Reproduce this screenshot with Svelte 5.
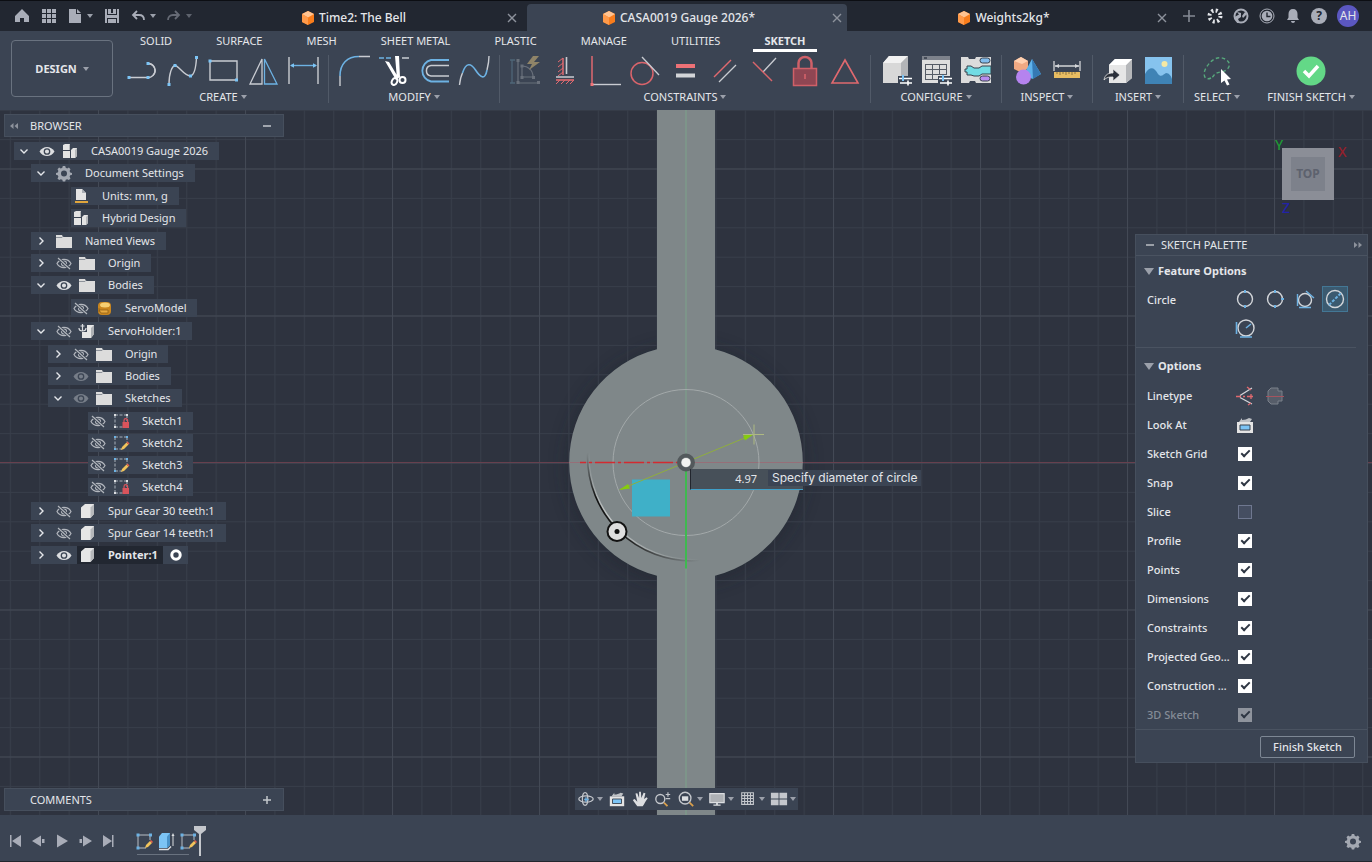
<script>
	const tools = {
		line: '<path d="M2 22.500H21M21 8.500a7 7 0 0 1 5 12" fill="none" stroke="#c9ccd2" stroke-width="1.400"/><path d="M21 8.500a7 7 0 0 1 0 14" fill="none" stroke="#c9ccd2" stroke-width="1.400"/><g fill="#7cc4f5"><path d="M.5 21h3v3h-3zM19.500 21h3v3h-3zM19.500 7h3v3h-3z"/></g>',
		spline:
			'<path d="M2 29.500C2 18 5 11 8 10.500S17 21 23.500 21C28 20 29 12 29.500 2.500" fill="none" stroke="#c9ccd2" stroke-width="1.400"/><path d="M.5 28h3v3h-3zM6.500 9h3v3h-3zM22 19.500h3v3h-3zM28 1h3v3h-3z" fill="#7cc4f5"/>',
		rect: '<path d="M3 6H30V25H3z" fill="none" stroke="#c9ccd2" stroke-width="1.400"/><path d="M1.500 4.500h3v3h-3zM28 23.500h3v3h-3z" fill="#7cc4f5"/>',
		mirror:
			'<path d="M15 4V29H3z" fill="none" stroke="#c9ccd2" stroke-width="1.300"/><path d="M17.500 4V29H30z" fill="none" stroke="#6db2e3" stroke-width="1.300"/>',
		dimension:
			'<path d="M2 2V29M31 2V29" stroke="#c9ccd2" stroke-width="1.400"/><path d="M4 10.500H29" stroke="#6db2e3" stroke-width="1.400"/><path d="M3 10.500l4-2.200v4.400zM30 10.500l-4-2.200v4.400z" fill="#7cc4f5"/>',
		fillet:
			'<path d="M2 31V21M21 1.500H32" stroke="#c9ccd2" stroke-width="1.400"/><path d="M2 21C2 9 9 1.500 21 1.500" fill="none" stroke="#6db2e3" stroke-width="1.600"/>',
		trim: '<path d="M1 3h5M8 3h5" stroke="#6db2e3" stroke-width="1.500"/><path d="M24 3h7" stroke="#c9ccd2" stroke-width="1.500"/><path d="M7 6l4 1 9 15-2 3zM17 1h4l1 21-3 2z" fill="#fff"/><ellipse cx="16.500" cy="26.500" rx="2.600" ry="3.600" fill="none" stroke="#fff" stroke-width="2" transform="rotate(25 16.500 26.500)"/><ellipse cx="24.500" cy="25" rx="3" ry="3" fill="none" stroke="#fff" stroke-width="2"/>',
		offset:
			'<path d="M31 5H13a11 11 0 0 0 0 21.500H31" fill="none" stroke="#6db2e3" stroke-width="1.800"/><path d="M31 10.500H13a5.300 5.300 0 0 0 0 10.500H31" fill="none" stroke="#c9ccd2" stroke-width="1.500"/>',
		curve:
			'<path d="M1.500 30C2 25 3 21 4.500 18M29 15C30 11 31 6 31 1" fill="none" stroke="#c9ccd2" stroke-width="1.400"/><path d="M4.500 18C8 7 13 8 17.500 15S27 26 29 15" fill="none" stroke="#6db2e3" stroke-width="1.600"/>',
		auto: '<path d="M3 5V28M1 5h5M1 28h5" stroke="#4f6678" stroke-width="1.300"/><path d="M9 5V28H30M13 11V22H24M13 11C19 11 24 15 24 22" fill="none" stroke="#69707b" stroke-width="1.200"/><path d="M7.500 4h3v3h-3zM7.500 26h3v3h-3zM28 26h3v3h-3zM11.500 9.500h3v3h-3zM11.500 21h3v3h-3zM23 21h3v3h-3z" fill="#69707b"/><path d="M24 1l-6 8h5l-3 6 11-8h-6l5-6z" fill="#8f8468"/>',
		fix: '<path d="M14 3V20" stroke="#e0696f" stroke-width="1.500"/><path d="M9 7l5-4M9 12l5-4M9 17l5-4M9 21l5-4" stroke="#e0696f"/><path d="M17.500 2V19M7 22H25" stroke="#c9ccd2" stroke-width="1.600"/><path d="M7 25H25" stroke="#e0696f" stroke-width="1.600"/><path d="M7 29l4-4M12 29l4-4M17 29l4-4M21 29l4-4" stroke="#e0696f"/>',
		coincident:
			'<path d="M3 1V28" stroke="#e0696f" stroke-width="1.500"/><path d="M4 29.500H32" stroke="#c9ccd2" stroke-width="1.400"/><path d="M1.500 28h3v3h-3z" fill="#f07478"/>',
		tangent:
			'<circle cx="13" cy="18.500" r="11" fill="none" stroke="#d9646b" stroke-width="1.500"/><path d="M13 2L30 20" stroke="#c9ccd2" stroke-width="1.300"/>',
		equal:
			'<path d="M7 9H26v4H7z" fill="#ed7176"/><path d="M7 18.500H26v4H7z" fill="#d3d5d8"/>',
		parallel:
			'<path d="M5 22L22 5" stroke="#e0696f" stroke-width="1.500"/><path d="M10 27L27 10" stroke="#c9ccd2" stroke-width="1.300"/>',
		perpendicular:
			'<path d="M27 3L14 17" stroke="#c9ccd2" stroke-width="1.300"/><path d="M4 7L23 26" stroke="#d9646b" stroke-width="1.500"/>',
		lock: '<path d="M9.500 13V8a6.500 6 0 0 1 13 0V13" fill="none" stroke="#cf6068" stroke-width="2.500"/><path d="M4.500 13.500H27.500V30.500H4.500z" fill="#8f4653" stroke="#cf6068" stroke-width="1.500"/><path d="M16 19v5" stroke="#d9646b" stroke-width="1.500"/>',
		triangle:
			'<path d="M16 5L29 28H3z" fill="none" stroke="#e0696f" stroke-width="1.600"/>',
		configBody:
			'<path d="M3 8L9 1H28V21L21 28H3z" fill="#d8d8d8"/><path d="M3 8L9 1H28L21 8z" fill="#f2f2f2"/><path d="M21 8L28 1V21L21 28z" fill="#b3b5b8"/><path d="M18 21h14v9H18z" fill="#3b4453"/><path d="M19 23.500h13M20 28h12" stroke="#fff" stroke-width="1.300"/><path d="M23 20v6" stroke="#7cc4f5" stroke-width="2"/><path d="M28 25.500v5" stroke="#fff" stroke-width="1.600"/>',
		configTable:
			'<path d="M2 1H30V28H2z" fill="#dedede"/><path d="M2 1H30V5H2z" fill="#7d828b"/><path d="M4 2h3v2H4z" fill="#454c58"/><path d="M5 9.500H27M5 14.500H27M5 19.500H27M5 24.500H18M5.500 9V25M12.500 9V25M19.500 9V20M26.500 9V20" stroke="#565c66"/><path d="M18 21h14v9H18z" fill="#3b4453"/><path d="M19 23.500h13M20 28h12" stroke="#fff" stroke-width="1.300"/><path d="M23 20v6" stroke="#7cc4f5" stroke-width="2"/><path d="M28 25.500v5" stroke="#fff" stroke-width="1.600"/>',
		configRules:
			'<path d="M1 2h7l1 2h6l1-2h15v26H16l-1-2h-5l-1 2H1z" fill="#dcdcdc"/><path d="M7 11h4l3 2h5l3-2h9v8H22l-3 2h-5l-3-1H7v-3H5v-3h2z" fill="#72dce4" stroke="#39424f"/><rect x="20" y="3" width="10" height="5" rx="2.500" fill="#82bcec" stroke="#39424f"/><rect x="20" y="21" width="10" height="5" rx="2.500" fill="#b88cf0" stroke="#39424f"/>',
		inspect:
			'<path d="M10 2l7 4v7l-6 5-8-4V6z" fill="#f0a983"/><path d="M10 2l7 4-6 3-8-3z" fill="#ffd0b0"/><path d="M21 4l9 15-9 5-7-7z" fill="#5fb2ea"/><path d="M21 4l9 15-8 5z" fill="#3579b4"/><circle cx="12.500" cy="22" r="7.500" fill="#b583ef"/>',
		measure:
			'<path d="M3 6V16M29 6V16M4 11H28" stroke="#d3d5d8" stroke-width="1.300"/><path d="M4 11l4-2v4zM28 11l-4-2v4z" fill="#d3d5d8"/><path d="M3 17H29V23H3z" fill="#e8bd62"/><path d="M6 17v2M9 17v3M12 17v2M15 17v3M18 17v2M21 17v3M24 17v2" stroke="#8d7440"/>',
		insertBody:
			'<path d="M7 10L13 4H30V23L24 28H7z" fill="#e6e6e6"/><path d="M24 10L30 4V23L24 28z" fill="#b5b7ba"/><path d="M7 10L13 4H30L24 10z" fill="#fff"/><path d="M2 25C3 19 7 18 11 18V14l7 6-7 6V22C7 22 5 22 2 25z" fill="#2b303a" stroke="#e6e6e6" stroke-width=".8"/>',
		insertImage:
			'<path d="M3 2H30V29H3z" fill="#86c3ee"/><path d="M3 19C8 11 12 12 16 19C19 23 22 19 24 18C27 18 29 21 30 24V29H3z" fill="#3f83b5"/><circle cx="22.500" cy="9" r="3" fill="#f5e9a5"/>',
		select:
			'<path d="M10 23C4 26 1 20 5 13S16 0 24 4S28 16 20 17S14 21 10 23z" fill="none" stroke="#57a87c" stroke-width="1.400" stroke-dasharray="3.500 2.500"/><path d="M20 14L30 24l-4 .5 2.500 5-2.500 1-2.500-5L20 28z" fill="#fff"/>',
		finish:
			'<circle cx="16" cy="16" r="14.500" fill="#63d887"/><path d="M9 16l5 5 9-10" fill="none" stroke="#fff" stroke-width="3.500"/>'
	};

	const groups = [
		{ label: 'CREATE', icons: ['line', 'spline', 'rect', 'mirror', 'dimension'] },
		{ label: 'MODIFY', icons: ['fillet', 'trim', 'offset', 'curve'] },
		{
			label: 'CONSTRAINTS',
			icons: ['auto', 'fix', 'coincident', 'tangent', 'equal', 'parallel', 'perpendicular', 'lock', 'triangle']
		},
		{ label: 'CONFIGURE', icons: ['configBody', 'configTable', 'configRules'] },
		{ label: 'INSPECT', icons: ['inspect', 'measure'] },
		{ label: 'INSERT', icons: ['insertBody', 'insertImage'] },
		{ label: 'SELECT', icons: ['select'] },
		{ label: 'FINISH SKETCH', icons: ['finish'] }
	];

	const menuTabs = ['SOLID', 'SURFACE', 'MESH', 'SHEET METAL', 'PLASTIC', 'MANAGE', 'UTILITIES', 'SKETCH'];
	let activeTab = $state('SKETCH');

	const docs = ['Time2: The Bell', 'CASA0019 Gauge 2026*', 'Weights2kg*'];
	let activeDoc = $state(1);

	const gear =
		'<path d="M8.800 2h2.400l.5 1.800 1.500.7 1.700-.9 1.600 1.700-.9 1.600.6 1.500 1.800.5v1.800l-1.800.6-.6 1.500.9 1.600-1.600 1.700-1.700-.9-1.500.6-.5 1.700H8.800l-.5-1.700-1.500-.6-1.700.9-1.600-1.700.9-1.600-.6-1.500L2 10.700V8.900l1.800-.5.6-1.500-.9-1.600 1.600-1.700 1.700.9 1.500-.7z" fill="#a3a8b1"/><circle cx="10" cy="9.500" r="3" fill="#3b4453"/>';

	// 20x18 icons for the browser tree
	const nodes = {
		eye: '<path d="M2.500 9.500C6 3.500 14 3.500 17.500 9.500C14 15.500 6 15.500 2.500 9.500z" fill="#dcdee1"/><circle cx="10" cy="9.500" r="2.700" fill="#dcdee1" stroke="#3b4453" stroke-width="1.300"/>',
		dim: '<path d="M2.500 9.500C6 3.500 14 3.500 17.500 9.500C14 15.500 6 15.500 2.500 9.500z" fill="#767d88"/><circle cx="10" cy="9.500" r="2.700" fill="#767d88" stroke="#3b4453" stroke-width="1.300"/>',
		off: '<path d="M3 9.500C6 4 14 4 17 9.500C14 15 6 15 3 9.500z" fill="none" stroke="#b3b7be" stroke-width="1.200"/><circle cx="10" cy="9.500" r="2.500" fill="none" stroke="#b3b7be" stroke-width="1.200"/><path d="M4 4L16 15" stroke="#3b4453" stroke-width="3"/><path d="M4 4L16 15" stroke="#b3b7be" stroke-width="1.200"/>',
		assembly:
			'<path d="M3 3l2-1h5v6H3zM3 9h7v7H3zM11 8l2-2h4v8l-2 2h-4z" fill="#e4e4e4"/><path d="M9 3l1-1v6H9zM15 8l2-2v8l-2 2z" fill="#b6b8bb"/>',
		gear,
		units:
			'<path d="M5 2h6l4 4v7H5z" fill="#e4e4e4"/><path d="M11 2l4 4h-4z" fill="#a9adb3"/><path d="M4 14H17V16H4z" fill="#e0a53c"/>',
		folder: '<path d="M2 3h6l1 2h9v11H2z" fill="#dcdcdc"/><path d="M2 5.500h6l1-1" fill="none" stroke="#8d929a"/>',
		body: '<rect x="4" y="3" width="13" height="13" rx="4" fill="#c9861f"/><ellipse cx="11" cy="6" rx="5" ry="2.500" fill="#f6cf72"/><path d="M5 9v4M5 11h9v3H7z" fill="#e8aa3f" stroke="#8a5c14" stroke-width=".7"/>',
		anchored:
			'<path d="M5 6l3-3h9v9l-3 4H5z" fill="#e6e6e6"/><path d="M14 6l3-3v9l-3 4z" fill="#aeb1b5"/><path d="M1 0h9v10H1z" fill="#3b4453"/><path d="M5.500 2v7M3.500 4h4M2 6c0 4 7 4 7 0" fill="none" stroke="#dcdee1" stroke-width="1.200"/>',
		part: '<path d="M4 5.500L8 2h9v10l-3.500 4H4z" fill="#e6e6e6"/><path d="M13.500 5.500L17 2v10l-3.500 4z" fill="#b6b8bb"/>',
		locked:
			'<path d="M4 3H16M4 3V15M4 15H12M16 3V9" stroke="#a9b0ba" stroke-dasharray="3 1.500"/><path d="M3 2h2v2H3zM15 2h2v2h-2zM3 14h2v2H3z" fill="#dcdee1"/><path d="M11.500 10h6.500v6h-6.500z" fill="#d9545c"/><path d="M13 10V8.500a1.800 1.800 0 0 1 3.600 0V10" fill="none" stroke="#d9545c" stroke-width="1.200"/>',
		edited:
			'<path d="M4 3H16M4 3V15M4 15H11M16 3V8" stroke="#a9b0ba" stroke-dasharray="3 1.500"/><path d="M3 2h2v2H3zM15 2h2v2h-2zM3 14h2v2H3z" fill="#6db2e3"/><path d="M10 16l1-3 4.500-4.500 2 2L13 15z" fill="#f1c35b"/><path d="M15.500 8.500l1-1 2 2-1 1z" fill="#e8604c"/>'
	};

	let tree = $state([
		{ label: 'CASA0019 Gauge 2026', icon: 'assembly', eye: 'eye', open: true, children: [
			{ label: 'Document Settings', icon: 'gear', open: true, children: [
				{ label: 'Units: mm, g', icon: 'units' },
				{ label: 'Hybrid Design', icon: 'assembly' }
			] },
			{ label: 'Named Views', icon: 'folder', children: [] },
			{ label: 'Origin', icon: 'folder', eye: 'off', children: [] },
			{ label: 'Bodies', icon: 'folder', eye: 'eye', open: true, children: [
				{ label: 'ServoModel', icon: 'body', eye: 'off' }
			] },
			{ label: 'ServoHolder:1', icon: 'anchored', eye: 'off', open: true, children: [
				{ label: 'Origin', icon: 'folder', eye: 'off', children: [] },
				{ label: 'Bodies', icon: 'folder', eye: 'dim', children: [] },
				{ label: 'Sketches', icon: 'folder', eye: 'dim', open: true, children: [
					{ label: 'Sketch1', icon: 'locked', eye: 'off' },
					{ label: 'Sketch2', icon: 'edited', eye: 'off' },
					{ label: 'Sketch3', icon: 'edited', eye: 'off' },
					{ label: 'Sketch4', icon: 'locked', eye: 'off' }
				] }
			] },
			{ label: 'Spur Gear 30 teeth:1', icon: 'part', eye: 'off', children: [] },
			{ label: 'Spur Gear 14 teeth:1', icon: 'part', eye: 'off', children: [] },
			{ label: 'Pointer:1', icon: 'part', eye: 'eye', active: true, children: [] }
		] }
	]);

	// 20x20 icons for the circle tool variants
	const circles = [
		{ name: 'Center diameter circle', art: '<circle cx="10" cy="10" r="7.500"/><path d="M10 1v3M10 16v3" stroke="#6db2e3" stroke-width="2"/>' },
		{ name: '2-point circle', art: '<circle cx="10" cy="10" r="7.500"/><path d="M10 1v3M10 16v3M16 10h3" stroke="#6db2e3" stroke-width="2"/>' },
		{ name: '2-tangent circle', art: '<circle cx="10" cy="11" r="6.500"/><path d="M2.500 5v12M4 18.500h12M11 2l8 7" stroke="#6db2e3"/>' },
		{ name: 'Diameter circle', art: '<circle cx="10" cy="10" r="8.500"/><path d="M4 16L16 4" stroke="#6db2e3" stroke-width="2" stroke-dasharray="3 1.500"/>' },
		{ name: '3-tangent circle', art: '<circle cx="11" cy="10" r="8"/><path d="M1.500 4v12M5 19h12M11 10l5-4" stroke="#6db2e3" stroke-width="1.600"/>' }
	];
	let circle = $state(3);

	let options = $state([
		{ label: 'Sketch Grid', on: true },
		{ label: 'Snap', on: true },
		{ label: 'Slice', on: false },
		{ label: 'Profile', on: true },
		{ label: 'Points', on: true },
		{ label: 'Dimensions', on: true },
		{ label: 'Constraints', on: true },
		{ label: 'Projected Geometries', on: true },
		{ label: 'Construction Geometries', on: true },
		{ label: '3D Sketch', on: true, disabled: true }
	]);

	const lookAt =
		'<path d="M2 7h16v11H2z" fill="#e4e4e4"/><path d="M4 7l3-4v2c3 0 5-1 7-2l3 1-2 3z" fill="#bfc2c6"/><path d="M5 10h10v5H5z" fill="#7cc4f5" stroke="#39424f"/>';

	const nav = [
		{ name: 'Orbit', more: true, art: '<ellipse cx="10" cy="10" rx="8" ry="3.500" fill="none" stroke="#c4c7cc" stroke-width="1.400"/><ellipse cx="9" cy="10" rx="3" ry="7" fill="none" stroke="#c4c7cc" stroke-width="1.400"/><path d="M10 8v5M8 10.500h5" stroke="#6db2e3" stroke-width="1.500"/>' },
		{ name: 'Look at', art: lookAt },
		{ name: 'Pan', art: '<path d="M7 18C5 15 3 13 2 11l2-1 3 3L5 4l2-.5L9 9V2h2l.5 7L14 3l2 .5L14.500 10l3-2 1 1.500C16 12 15 16 13 18z" fill="#dcdee1"/>' },
		{ name: 'Zoom', art: '<circle cx="7" cy="10" r="5" fill="none" stroke="#c4c7cc" stroke-width="1.500"/><path d="M11 14l4 4" stroke="#d99f4c" stroke-width="2"/><path d="M13 5h5M15.500 2.500v5M13 9.500h5" stroke="#c4c7cc" stroke-width="1.300"/>' },
		{ name: 'Fit', more: true, art: '<circle cx="9" cy="9" r="6.500" fill="none" stroke="#c4c7cc" stroke-width="1.500"/><path d="M5.500 7h7v5h-7z" fill="#dcdee1"/><path d="M14 14l4 4" stroke="#d99f4c" stroke-width="2"/>' },
		{ name: 'Display', more: true, art: '<path d="M2 4h16v10H2z" fill="#aeb1b5" stroke="#dcdee1" stroke-width="1.200"/><path d="M9 14h2v2h3v1.500H6V16h3z" fill="#dcdee1"/>' },
		{ name: 'Grid', more: true, art: '<path d="M3 3h13v13H3zM6.250 3v13M9.500 3v13M12.750 3v13M3 6.250h13M3 9.500h13M3 12.750h13" fill="none" stroke="#c4c7cc" stroke-width="1.200"/>' },
		{ name: 'Viewports', more: true, art: '<path d="M1 3h8.500v6.500H1zM10.500 3H19v6.500h-8.500zM1 10.500h8.500V17H1zM10.500 10.500H19V17h-8.500z" fill="#c4c7cc"/>' }
	];

	const playback = [
		{ name: 'Go to start', art: 'M4 4h1.500v12H4zM15 4v12L6 10z' },
		{ name: 'Step back', art: 'M3 10l9-5.500v11zM13 8h2.500v4H13z' },
		{ name: 'Play', art: 'M5 3.500l11 6.500-11 6.500z' },
		{ name: 'Step forward', art: 'M17 10L8 4.500v11zM4.500 8H7v4H4.500z' },
		{ name: 'Go to end', art: 'M15.500 4H14v12h1.500zM5 4v12l9-6z' }
	];
	const history = [
		'<path d="M4 4H16M4 4V17M4 17H12M16 4V9" stroke="#b9bec6"/><path d="M2.500 2.500h3v3h-3zM15 2.500h3v3h-3zM2.500 15.500h3v3h-3z" fill="#6db2e3"/><path d="M11 17l1-3 4-4 2 2-4 4z" fill="#f1c35b"/><path d="M16 10l1-1 2 2-1 1z" fill="#e8604c"/>',
		'<path d="M3 5.500L6 2h8v12l-3 3H3z" fill="#7cc4f5"/><path d="M11 5.500L14 2v12l-3 3z" fill="#4a93c9"/><path d="M3 18.500h9l3-3" fill="none" stroke="#dcdee1" stroke-width="1.400"/><path d="M17 4v11" stroke="#dcdee1"/><path d="M17 2l1.500 3h-3z" fill="#dcdee1"/>'
	];

	let diameter = $state('4.97');

	function toggle(node) {
		node.open = !node.open;
	}

	function toggleEye(node) {
		node.eye = node.eye === 'off' ? 'eye' : 'off';
	}
</script>

{#snippet branch(list, depth)}
	<ul class="branch">
		{#each list as node}
			<li>
				<div class="node" class:leaf={!node.children} style="--depth: {depth}">
					{#if node.children}
						<button aria-label="Expand {node.label}" onclick={() => toggle(node)}>
							<svg width="20" height="18" viewBox="0 0 20 18">
								<path d={node.open ? 'M6.500 7.500L10 11l3.500-3.500' : 'M8.500 5.500L12 9l-3.500 3.500'} fill="none" stroke="#e4e6ea" stroke-width="1.400" />
							</svg>
						</button>
					{/if}
					{#if node.eye}
						<button aria-label="Visibility of {node.label}" onclick={() => toggleEye(node)}>
							<svg width="20" height="18" viewBox="0 0 20 18">{@html nodes[node.eye]}</svg>
						</button>
					{/if}
					<span class="name" class:current={node.active}>
						<svg width="20" height="18" viewBox="0 0 20 18">{@html nodes[node.icon]}</svg>
						{node.label}
					</span>
					{#if node.active}
						<svg width="20" height="18" viewBox="0 0 20 18"><circle cx="10" cy="9" r="4.200" fill="none" stroke="#fff" stroke-width="3" /></svg>
					{/if}
				</div>
				{#if node.open && node.children.length}
					{@render branch(node.children, depth + 1)}
				{/if}
			</li>
		{/each}
	</ul>
{/snippet}

<div class="app">
	<header class="titlebar">
		<div class="quick">
			<button aria-label="Home"><svg width="16" height="16" viewBox="0 0 16 16"><path d="M8 1L1 8v6h5v-4h4v4h5V8z" fill="#a9adb8" /></svg></button>
			<button aria-label="Data panel"><svg width="16" height="16" viewBox="0 0 16 16"><path d="M1 1h4v4H1zM6 1h4v4H6zM11 1h4v4h-4zM1 6h4v4H1zM6 6h4v4H6zM11 6h4v4h-4zM1 11h4v4H1zM6 11h4v4H6zM11 11h4v4h-4z" fill="#a9adb8" /></svg></button>
			<button class="split" aria-label="File"><svg width="14" height="16" viewBox="0 0 14 16"><path d="M1 1h7v5h5v9H1zM9 1l4 4H9z" fill="#a9adb8" /></svg><i class="caret"></i></button>
			<button aria-label="Save"><svg width="16" height="16" viewBox="0 0 16 16"><path d="M1 1h2v6h10V1h2v14h-2v-5H3v5H1zM4 1h3v4h2V1h3v5H4zM4 11h8v4H4z" fill="#a9adb8" /></svg></button>
			<button class="split" aria-label="Undo"><svg width="14" height="16" viewBox="0 0 14 16"><path d="M6 3L2 7l4 4M2 7h6c3 0 5 2 5 5" fill="none" stroke="#a9adb8" stroke-width="1.800" /></svg><i class="caret"></i></button>
			<button class="split faded" aria-label="Redo"><svg width="14" height="16" viewBox="0 0 14 16"><path d="M8 3l4 4-4 4M12 7H6c-3 0-5 2-5 5" fill="none" stroke="#a9adb8" stroke-width="1.800" /></svg><i class="caret"></i></button>
		</div>
		<div class="docs">
			{#each docs as doc, i}
				<div class="doc" class:active={i === activeDoc}>
					<button class="title" onclick={() => (activeDoc = i)}>
						<svg width="14" height="16" viewBox="0 0 14 16">
							<path d="M7 1l6 3v8l-6 3-6-3V4z" fill="#f97d1c" />
							<path d="M7 1l6 3-6 3.500L1 4z" fill="#ffc391" />
							<path d="M1 4l6 3.500V15l-6-3z" fill="#ff9a4a" />
						</svg>
						{doc}
					</button>
					<button aria-label="Close {doc}"><svg width="14" height="14" viewBox="0 0 14 14"><path d="M3 3l8 8M11 3l-8 8" stroke="#8d929c" stroke-width="1.400" /></svg></button>
				</div>
			{/each}
		</div>
		<div class="account">
			<button aria-label="New design"><svg width="16" height="16" viewBox="0 0 16 16"><path d="M8 2v12M2 8h12" stroke="#858a94" stroke-width="1.600" /></svg></button>
			<button aria-label="Extensions"><svg width="16" height="16" viewBox="0 0 16 16"><circle cx="8" cy="8" r="5.500" fill="none" stroke="#e4e6ea" stroke-width="4" stroke-dasharray="2 2.320" /></svg></button>
			<button aria-label="Sync"><svg width="16" height="16" viewBox="0 0 16 16"><circle cx="8" cy="8" r="6.500" fill="none" stroke="#a9adb8" stroke-width="2" /><path d="M1.500 9L6 6.500 4 4l4 1v4l-3 2 2 4H4z" fill="#a9adb8" /><path d="M9 8l3-4 2 2-4 4z" fill="#a9adb8" /></svg></button>
			<button aria-label="Job status"><svg width="16" height="16" viewBox="0 0 16 16"><circle cx="8" cy="8" r="7" fill="none" stroke="#a9adb8" /><circle cx="8" cy="8" r="5.300" fill="#a9adb8" /><path d="M8 4.500V8.500h3.500" fill="none" stroke="#222731" stroke-width="1.400" /></svg></button>
			<button aria-label="Notifications"><svg width="16" height="16" viewBox="0 0 16 16"><path d="M8 1c3 0 4.500 2 4.500 5v3.500L14 12H2l1.500-2.500V6C3.500 3 5 1 8 1zM6 13h4c0 2.500-4 2.500-4 0z" fill="#a9adb8" /></svg></button>
			<button class="help" aria-label="Help">?</button>
			<button class="avatar">AH</button>
		</div>
	</header>

	<div class="ribbon">
		<button class="workspace">DESIGN <i class="caret"></i></button>
		<div class="commands">
			<nav class="menu">
				{#each menuTabs as tab}
					<button class:active={tab === activeTab} onclick={() => (activeTab = tab)}>{tab}</button>
				{/each}
			</nav>
			<div class="groups">
				{#each groups as group}
					<div class="group">
						<div class="tools">
							{#each group.icons as icon}
								<button aria-label={icon}><svg width="32" height="32" viewBox="0 0 32 32">{@html tools[icon]}</svg></button>
							{/each}
						</div>
						<button class="label">{group.label}<i class="caret"></i></button>
					</div>
				{/each}
			</div>
		</div>
	</div>

	<main class="stage">
		<svg class="canvas" width="100%" height="100%">
			<svg x="50%" y="50%" overflow="visible">
				<defs>
					<pattern id="minor" width="29.400" height="29.400" patternUnits="userSpaceOnUse">
						<path d="M0 .5H29.400M.5 0V29.400" stroke="#383e4a" stroke-width="1" />
					</pattern>
					<pattern id="major" width="147" height="147" patternUnits="userSpaceOnUse">
						<path d="M0 .5H147M.5 0V147" stroke="#434955" stroke-width="1" />
					</pattern>
					<linearGradient id="arc" x1="0" y1="0" x2="1" y2="1">
						<stop offset="0" stop-color="#111" stop-opacity="0" />
						<stop offset=".25" stop-color="#111" />
						<stop offset=".6" stop-color="#222" />
						<stop offset="1" stop-color="#222" stop-opacity="0" />
					</linearGradient>
					<linearGradient id="arclight" x1="0" y1="0" x2="1" y2="1">
						<stop offset="0" stop-color="#c4c8c8" stop-opacity="0" />
						<stop offset=".4" stop-color="#c4c8c8" />
						<stop offset="1" stop-color="#c4c8c8" stop-opacity="0" />
					</linearGradient>
					<filter id="shade" x="-20%" y="-20%" width="140%" height="140%">
						<feGaussianBlur stdDeviation="9" />
					</filter>
				</defs>
				<circle r="120" cy="3" fill="#1d212a" opacity=".4" filter="url(#shade)" />
				<rect x="-1470" y="-1470" width="2940" height="2940" fill="url(#minor)" />
				<rect x="-1470" y="-1470" width="2940" height="2940" fill="url(#major)" />
				<path d="M-2000 0H2000" stroke="#67404e" />
				<path d="M-29 -2000H29V-113.300A117 117 0 0 1 29 113.300V2000H-29V113.300A117 117 0 0 1 -29 -113.300z" fill="#7f8789" />
				<path d="M-117 0H117" stroke="#966f78" />
				<path d="M0 -2000V2000" stroke="#7da38a" />
				<circle r="73" fill="none" stroke="#a3a9aa" />
				<path d="M-97 -10C-99 50 -49 101 14 97" fill="none" stroke="url(#arclight)" stroke-width="1.500" />
				<path d="M-98.500 -10C-100.500 51 -50 103 14 98" fill="none" stroke="url(#arc)" stroke-width="1.600" />
				<path d="M-106 0H0" stroke="#d32a30" stroke-width="1.600" stroke-dasharray="20 3 3 3" stroke-dashoffset="14" />
				<path d="M0 0V106" stroke="#3fb950" stroke-width="2" />
				<path d="M-54 17h38v37h-38z" fill="#3fb0c8" />
				<path d="M-66 27L67 -28" stroke="#8fae3e" />
				<path d="M-67 27.500l9-6 2 4.500zM68 -28.500l-11 1.500 2 5z" fill="#86cc0e" />
				<path d="M57 -28H78M68 -38V-18" stroke="#aeb981" />
				<circle r="7" fill="#8c9496" stroke="#53595c" stroke-width="4" />
				<circle r="4.500" fill="#f2f2f0" />
				<circle cx="-69" cy="69" r="9.500" fill="#dedede" stroke="#121212" stroke-width="2" />
				<circle cx="-69" cy="69" r="2.500" fill="#111" />
			</svg>
		</svg>

		<div class="prompt">
			<input aria-label="Circle diameter" bind:value={diameter} />
			<span>Specify diameter of circle</span>
		</div>

		<div class="hud">
			<aside class="left">
				<div class="bar">
					<svg width="10" height="10" viewBox="0 0 10 10"><path d="M4.500 2v6L1 5zM9 2v6L5.500 5z" fill="#8d929c" /></svg>
					<span>BROWSER</span>
					<button aria-label="Collapse browser"><svg width="10" height="10" viewBox="0 0 10 10"><path d="M1 5h8" stroke="#c4c7cc" stroke-width="1.500" /></svg></button>
				</div>
				<div class="tree">{@render branch(tree, 0)}</div>
				<div class="bar comments">
					<span>COMMENTS</span>
					<button aria-label="Add comment"><svg width="10" height="10" viewBox="0 0 10 10"><path d="M1 5h8M5 1v8" stroke="#c4c7cc" stroke-width="1.500" /></svg></button>
				</div>
			</aside>

			<nav class="navbar">
				{#each nav as item}
					<button aria-label={item.name}>
						<svg width="18" height="18" viewBox="0 0 20 20">{@html item.art}</svg>
						{#if item.more}<i class="caret"></i>{/if}
					</button>
				{/each}
			</nav>

			<aside class="right">
				<svg class="cube" width="80" height="80" viewBox="0 0 80 80">
					<path d="M10 12H62V64H10z" fill="#8b8e97" />
					<path d="M19 21H53V55H19z" fill="#7d818b" />
					<text x="36" y="42" text-anchor="middle" font-size="12" font-weight="700" fill="#5d626e">TOP</text>
					<text x="3" y="14" font-size="14" font-weight="500" fill="#1f9a35">Y</text>
					<text x="66" y="21" font-size="14" font-weight="500" fill="#94202c">X</text>
					<text x="10" y="77" font-size="14" font-weight="500" fill="#2222a8">Z</text>
				</svg>
				<section class="palette">
					<header>
						<svg width="10" height="10" viewBox="0 0 10 10"><path d="M1 5h8" stroke="#c4c7cc" stroke-width="1.400" /></svg>
						<span>SKETCH PALETTE</span>
						<svg width="10" height="10" viewBox="0 0 10 10"><path d="M1 2v6l3.500-3zM5.500 2v6L9 5z" fill="#8d929c" /></svg>
					</header>
					<div class="section">
						<h2><i class="caret"></i>Feature Options</h2>
						<div class="row tall">
							<span>Circle</span>
							<div class="choices">
								{#each circles as c, i}
									<button class:active={i === circle} aria-label={c.name} onclick={() => (circle = i)}>
										<svg width="20" height="20" viewBox="0 0 20 20" fill="none" stroke="#d3d6da" stroke-width="1.400">{@html c.art}</svg>
									</button>
								{/each}
							</div>
						</div>
					</div>
					<hr />
					<div class="section">
						<h2><i class="caret"></i>Options</h2>
						<div class="row">
							<span>Linetype</span>
							<div class="choices">
								<button aria-label="Construction">
									<svg width="20" height="20" viewBox="0 0 20 20" fill="none">
										<path d="M17 2L5 9.500M5 11.500L17 18" stroke="#d3d6da" stroke-width="1.300" />
										<path d="M1 10.500h5M8 10.500h2M12 10.500h6M12 1l4 3M13 19l3-2M16 8v5" stroke="#e0696f" stroke-width="1.300" />
									</svg>
								</button>
								<button aria-label="Centerline">
									<svg width="20" height="20" viewBox="0 0 20 20">
										<path d="M6 2h7v3h4v10h-4v3H6l-3-3V5z" fill="#565d69" stroke="#7b818b" />
										<path d="M1 10.500h18" stroke="#a5545f" />
									</svg>
								</button>
							</div>
						</div>
						<div class="row">
							<span>Look At</span>
							<div class="choices"><button aria-label="Look at"><svg width="20" height="20" viewBox="0 0 20 20">{@html lookAt}</svg></button></div>
						</div>
						{#each options as option}
							<label class="row" class:disabled={option.disabled}>
								<span>{option.label}</span>
								<input type="checkbox" bind:checked={option.on} disabled={option.disabled} />
							</label>
						{/each}
					</div>
					<footer><button>Finish Sketch</button></footer>
				</section>
			</aside>
		</div>
	</main>

	<footer class="timeline">
		<div class="playback">
			{#each playback as p}
				<button aria-label={p.name}><svg width="20" height="20" viewBox="0 0 20 20"><path d={p.art} fill="#a9adb8" /></svg></button>
			{/each}
		</div>
		<div class="history">
			{#each [0, 1, 0] as kind}
				<button aria-label="Feature"><svg width="20" height="20" viewBox="0 0 20 20">{@html history[kind]}</svg></button>
			{/each}
		</div>
		<svg class="marker" width="12" height="32" viewBox="0 0 12 32"><path d="M0 1h12v4L7 9v22H5V9L0 5z" fill="#c4c7cc" /></svg>
		<button class="prefs" aria-label="Preferences"><svg width="20" height="18" viewBox="0 0 20 18">{@html gear}</svg></button>
	</footer>
</div>

<style>
	:global(body) {
		background: #2e333f;
	}
	.app {
		display: flex;
		flex-direction: column;
		min-height: 100vh;
		font: 11px/18px 'Noto Sans', sans-serif;
		color: #e4e6ea;
	}
	button,
	input {
		font: inherit;
		color: inherit;
		background: none;
		border: 0;
		padding: 0;
		margin: 0;
	}
	svg {
		display: block;
		flex: none;
	}
	.caret {
		display: inline-block;
		border: 3px solid transparent;
		border-top: 4px solid #9ba0aa;
		border-bottom: 0;
	}

	/* title bar */
	.titlebar {
		display: grid;
		grid-template-columns: 197px 1fr 195px;
		gap: 5px;
		height: 31px;
		box-sizing: border-box;
		border-top: 1px solid #0c0e13;
		background: #222731;
		font-size: 12px;
	}
	.quick {
		display: flex;
		align-items: center;
		gap: 11px;
		padding-left: 14px;
	}
	.split {
		display: flex;
		align-items: center;
		gap: 5px;
	}
	.faded {
		opacity: 0.5;
	}
	.docs {
		display: flex;
		gap: 5px;
		padding-top: 3px;
	}
	.doc {
		flex: 1;
		display: flex;
		align-items: center;
		border-radius: 4px 4px 0 0;
		padding-right: 3px;
		font-weight: 500;
	}
	.doc.active {
		background: #3b4453;
	}
	.title {
		flex: 1;
		display: flex;
		align-items: center;
		justify-content: center;
		gap: 4px;
	}
	.account {
		display: flex;
		align-items: center;
		gap: 10px;
		padding-left: 4px;
	}
	.help {
		width: 16px;
		height: 16px;
		border-radius: 8px;
		background: #a9adb8;
		color: #222731;
		font-weight: 700;
		line-height: 16px;
	}
	.avatar {
		width: 22px;
		height: 22px;
		border-radius: 11px;
		background: #5b57c0;
	}

	/* ribbon */
	.ribbon {
		display: flex;
		height: 79px;
		background: #3b4453;
	}
	.workspace {
		width: 102px;
		margin: 9px 5px 13px 11px;
		border: 1px solid #69727f;
		border-radius: 4px;
		font-weight: 700;
	}
	.workspace .caret {
		margin: 0 0 2px 3px;
	}
	.commands {
		flex: 1;
		display: flex;
		flex-direction: column;
	}
	.menu {
		display: flex;
		gap: 22px;
		padding-left: 11px;
		height: 21px;
	}
	.menu button {
		padding: 1px 11px 0;
		border-bottom: 3px solid transparent;
	}
	.menu button.active {
		border-color: #fff;
		font-weight: 700;
	}
	.groups {
		flex: 1;
		display: flex;
		padding-top: 2px;
	}
	.group {
		display: flex;
		flex-direction: column;
		align-items: center;
		padding: 0 5px;
		background: linear-gradient(#515a68, #515a68) right 1px / 1px 48px no-repeat;
		border-right: 1px solid transparent;
		background-origin: border-box;
	}
	.group:nth-last-child(2) {
		padding: 0 10px;
		background: none;
	}
	.group:last-child {
		flex: 1;
		padding: 0;
		background: none;
	}
	.tools {
		display: flex;
		height: 34px;
	}
	.tools button {
		width: 40px;
		display: grid;
		place-items: center;
	}
	.label {
		white-space: nowrap;
		display: flex;
		align-items: center;
		gap: 3px;
	}

	/* viewport */
	.stage {
		position: relative;
		flex: 1;
		display: flex;
		background: #2e333f;
	}
	.canvas {
		position: absolute;
		inset: 0;
	}
	.prompt {
		position: absolute;
		left: calc(50% + 4px);
		top: calc(50% + 6px);
	}
	.prompt input {
		display: block;
		box-sizing: border-box;
		width: 113px;
		height: 21px;
		padding-right: 46px;
		text-align: right;
		background: #475059;
		border-left: 1px solid #22262e;
		border-bottom: 1px solid #3f9fc8;
	}
	.prompt span {
		position: absolute;
		left: 78px;
		top: 1px;
		padding: 0 4px;
		line-height: 16px;
		white-space: nowrap;
		font-family: Inter, sans-serif;
		font-size: 12px;
		background: #3b4453;
	}
	.hud {
		position: relative;
		flex: 1;
		display: grid;
		grid-template-columns: 280px 1fr 280px;
		padding: 4px;
	}
	.left {
		display: flex;
		flex-direction: column;
	}
	.bar {
		display: flex;
		align-items: center;
		gap: 11px;
		height: 23px;
		box-sizing: border-box;
		padding: 0 11px 0 4px;
		border: 1px solid #464f5d;
		background: #3b4453;
	}
	.bar span {
		flex: 1;
	}
	.comments {
		margin-top: auto;
		padding-left: 25px;
	}
	.tree {
		padding: 5px 0 16px 10px;
	}
	.branch {
		list-style: none;
		margin: 0;
		padding: 0;
	}
	.branch .branch .branch {
		padding: 1px 0;
	}
	.node {
		display: flex;
		gap: 3px;
		width: max-content;
		height: 18px;
		margin-bottom: 4px;
		margin-left: calc(var(--depth) * 17px);
		padding-right: 11px;
		background: #3b4453;
		line-height: 17px;
	}
	.leaf {
		margin-left: calc(var(--depth) * 17px + 23px);
	}
	.name {
		display: flex;
		gap: 11px;
	}
	.name.current {
		background: #222731;
		font-weight: 700;
		padding-right: 5px;
	}
	.node:has(.current) {
		padding-right: 2px;
	}
	.navbar {
		align-self: end;
		justify-self: center;
		display: flex;
		align-items: center;
		gap: 5px;
		height: 22px;
		padding: 0 2px;
		margin-bottom: 1px;
		background: #3b4453;
	}
	.navbar button {
		display: flex;
		align-items: center;
		gap: 2px;
	}
	.right {
		display: flex;
		flex-direction: column;
		align-items: flex-end;
		padding-bottom: 48px;
	}
	.cube {
		margin: 22px 16px 18px 0;
	}

	/* sketch palette */
	.palette {
		width: 233px;
		box-sizing: border-box;
		border: 1px solid #464f5d;
		background: #3b4453;
		font-weight: 500;
	}
	.palette header {
		display: flex;
		align-items: center;
		gap: 6px;
		height: 20px;
		padding: 0 4px 0 9px;
		border-bottom: 1px solid #4a5361;
		font-weight: 400;
	}
	.palette header span {
		flex: 1;
	}
	.section {
		padding: 0 11px;
	}
	.palette h2 {
		display: flex;
		align-items: center;
		gap: 4px;
		margin: 0;
		height: 30px;
		margin-left: -3px;
		font-size: 11px;
		font-weight: 700;
	}
	.palette h2 .caret {
		border-width: 7px 5px 0;
	}
	.row {
		display: flex;
		align-items: center;
		height: 29px;
	}
	.row > span {
		width: 84px;
		margin-right: 7px;
		overflow: hidden;
		text-overflow: ellipsis;
		white-space: nowrap;
	}
	.row.tall {
		align-items: flex-start;
		height: 61px;
		line-height: 28px;
	}
	.choices {
		display: flex;
		flex-wrap: wrap;
		gap: 3px 4px;
		flex: 1;
		margin-left: -6px;
	}
	.choices button {
		display: grid;
		place-items: center;
		width: 26px;
		height: 26px;
		box-sizing: border-box;
		border: 1px solid transparent;
	}
	.choices button.active {
		background: #3b5a70;
		border-color: #437795;
	}
	.palette hr {
		margin: 0 11px 3px 0;
		border: 0;
		border-top: 1px solid #4a5361;
	}
	input[type='checkbox'] {
		appearance: none;
		width: 14px;
		height: 14px;
		box-sizing: border-box;
		border: 1px solid #6f7890;
		background: #454e61;
	}
	input[type='checkbox']:checked {
		display: grid;
		place-items: center;
		border-color: #fff;
		background: #fff;
	}
	input[type='checkbox']:checked::before {
		content: '';
		width: 7px;
		height: 3px;
		margin-bottom: 3px;
		border: solid #2e3643;
		border-width: 0 0 2px 2px;
		transform: rotate(-45deg);
	}
	.disabled {
		color: #858c97;
	}
	input[type='checkbox']:disabled {
		border-color: #8f949d;
		background: #8f949d;
	}
	.palette footer {
		display: flex;
		justify-content: flex-end;
		padding: 6px 12px 4px;
		border-top: 1px solid #4a5361;
	}
	.palette footer button {
		width: 95px;
		height: 22px;
		box-sizing: border-box;
		border: 1px solid #7d8794;
		border-radius: 2px;
	}

	/* timeline */
	.timeline {
		display: flex;
		align-items: center;
		height: 47px;
		box-sizing: border-box;
		padding: 6px 9px 0 6px;
		border-bottom: 1px solid #22262e;
		background: #3b4453;
	}
	.playback {
		display: flex;
		gap: 3px;
	}
	.history {
		display: flex;
		gap: 2px;
		margin-left: 16px;
		padding: 4px 0;
		background: linear-gradient(#69727f, #69727f) 3px bottom / 52px 1px no-repeat;
	}
	.marker {
		margin-left: -4px;
	}
	.prefs {
		margin-left: auto;
	}
</style>
